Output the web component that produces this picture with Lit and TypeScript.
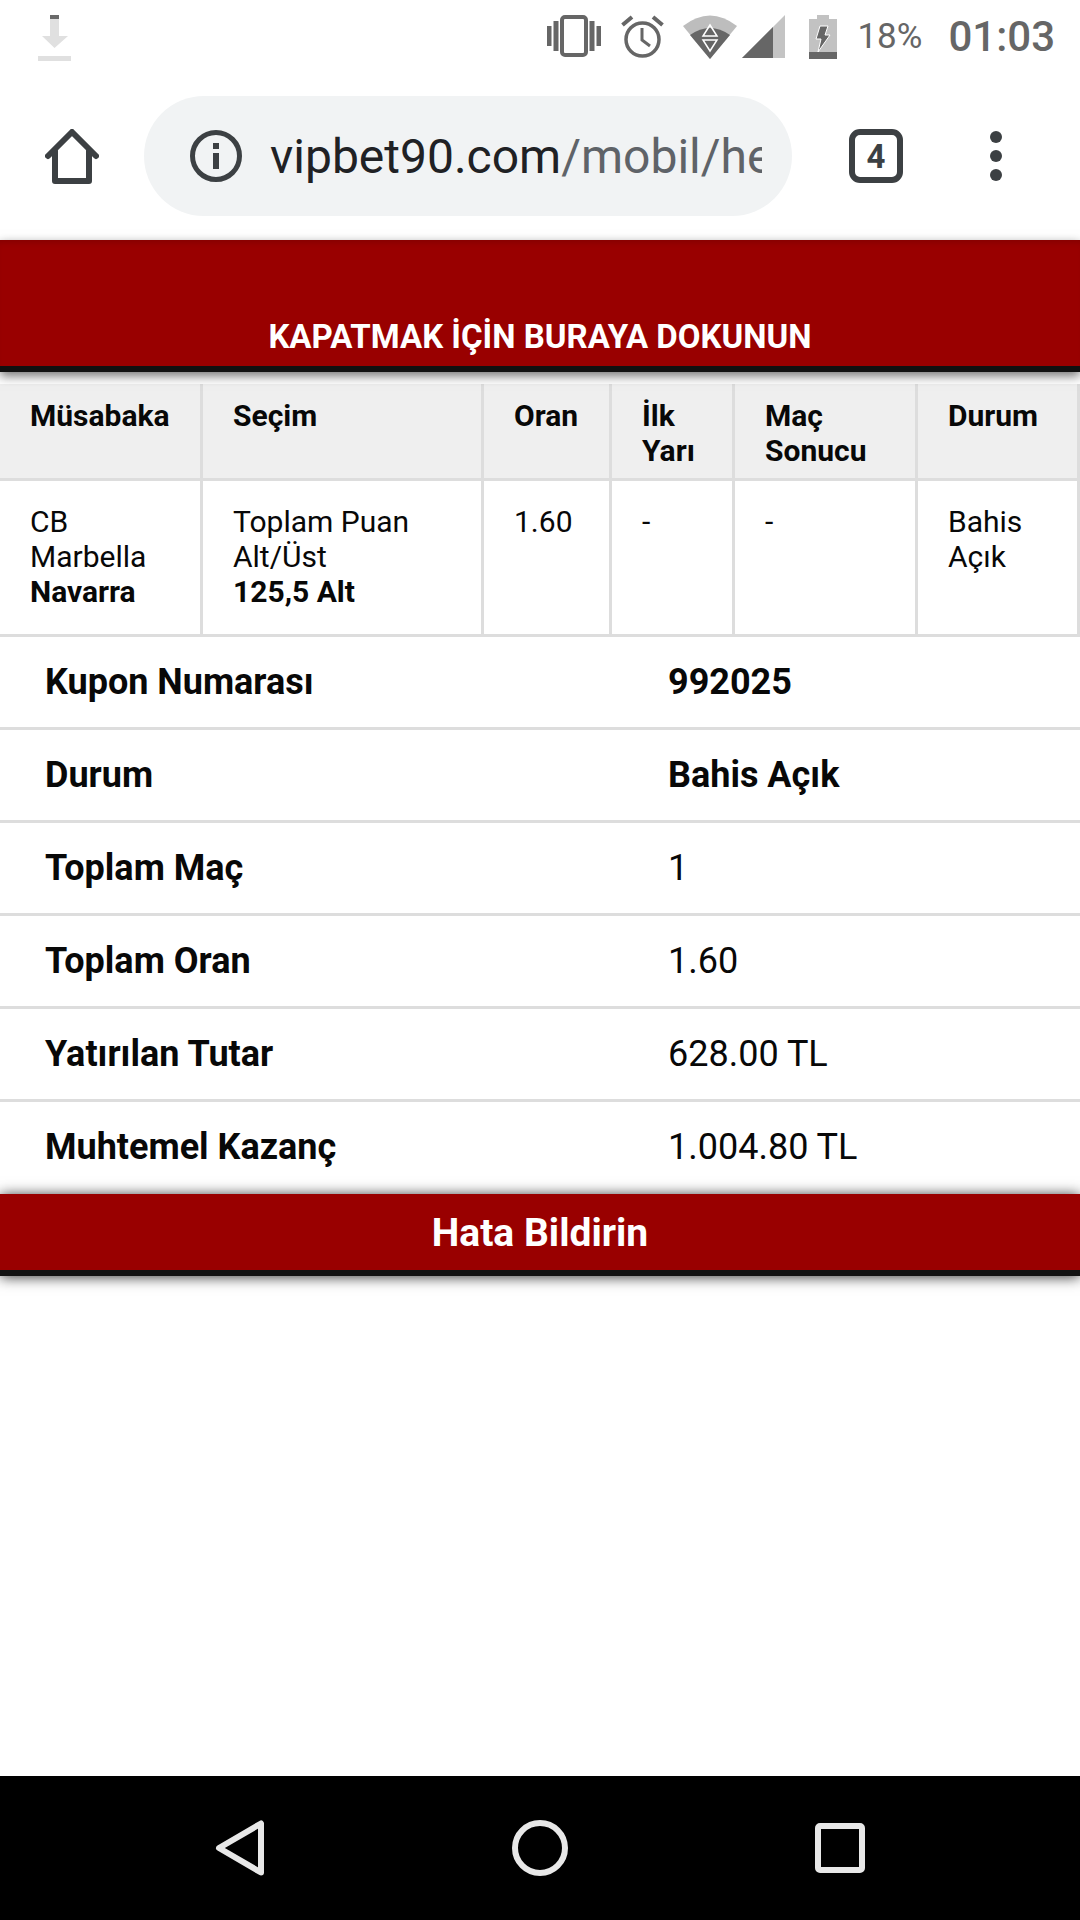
import { LitElement, html, css, svg } from 'lit';
import { customElement } from 'lit/decorators.js';

const GREY = '#666';
const INK = '#3c4043';

const headers = ['Müsabaka', 'Seçim', 'Oran', 'İlk Yarı', 'Maç Sonucu', 'Durum'];

const summary = [
  { label: 'Kupon Numarası', value: '992025', strong: true },
  { label: 'Durum', value: 'Bahis Açık', strong: true },
  { label: 'Toplam Maç', value: '1', strong: false },
  { label: 'Toplam Oran', value: '1.60', strong: false },
  { label: 'Yatırılan Tutar', value: '628.00 TL', strong: false },
  { label: 'Muhtemel Kazanç', value: '1.004.80 TL', strong: false },
];

const icons = {
  download: svg`<svg class="ic" width="34" height="46" viewBox="0 0 34 46">
    <rect x="12" y="0" width="9" height="4" fill="#6a6a6a"/>
    <path d="M12 4h9v17h9L16.5 33 4 21h8z" fill="#e0e0e0"/>
    <rect x="0" y="41" width="33" height="5" fill="#e0e0e0"/>
  </svg>`,
  vibrate: svg`<svg class="ic" width="54" height="42" viewBox="0 0 54 42" fill="${GREY}">
    <rect x="15" y="2" width="24" height="38" rx="3" fill="none" stroke="${GREY}" stroke-width="4"/>
    <rect x="0" y="11" width="4.500" height="20"/><rect x="6.500" y="6" width="5" height="30"/>
    <rect x="42.500" y="6" width="5" height="30"/><rect x="49.500" y="11" width="4.500" height="20"/>
  </svg>`,
  alarm: svg`<svg class="ic" width="43" height="43" viewBox="0 0 43 43" fill="none" stroke="${GREY}">
    <circle cx="21.500" cy="24.500" r="16.500" stroke-width="3.500"/>
    <path d="M21 13v12l8 6" stroke-width="3"/>
    <path d="M1.500 10L11 2M41.500 10L32 2" stroke-width="4"/>
  </svg>`,
  wifi: svg`<svg class="ic" width="54" height="44" viewBox="0 0 54 44">
    <path d="M0 11Q27 -10 54 11L27 44Z" fill="#bdbdbd"/>
    <path d="M7 20Q27 6 47 20L27 44Z" fill="${GREY}"/>
    <path d="M27 10l7 11H20zM20 25h14l-7 11z" fill="none" stroke="#fff" stroke-width="1.500"/>
  </svg>`,
  signal: svg`<svg class="ic" width="43" height="43" viewBox="0 0 43 43">
    <path d="M0 43L43 0V43Z" fill="#c4c4c4"/>
    <path d="M0 43L31 12V43Z" fill="${GREY}"/>
  </svg>`,
  battery: svg`<svg class="ic" width="28" height="44" viewBox="0 0 28 44">
    <path d="M0 4h8V0h12v4h8v40H0z" fill="#c2c2c2"/>
    <rect x="0" y="37" width="28" height="7" fill="${GREY}"/>
    <path d="M11 11h8l-3 9h5L9 37l3-13H7z" fill="${GREY}" stroke="#fff" stroke-width="1"/>
  </svg>`,
  home: svg`<svg width="54" height="55" viewBox="0 0 54 55" fill="none" stroke="${INK}" stroke-width="6" stroke-linecap="round" stroke-linejoin="round">
    <path d="M3 27L27 3l24 24"/>
    <path d="M10 22v30h34V22"/>
  </svg>`,
  info: svg`<svg width="52" height="52" viewBox="0 0 52 52">
    <circle cx="26" cy="26" r="23.500" fill="none" stroke="${INK}" stroke-width="5"/>
    <rect x="23" y="13" width="6" height="6" fill="${INK}"/>
    <rect x="23" y="23" width="6" height="16" fill="${INK}"/>
  </svg>`,
  more: svg`<svg width="12" height="50" viewBox="0 0 12 50" fill="${INK}">
    <circle cx="6" cy="6" r="6"/><circle cx="6" cy="25" r="6"/><circle cx="6" cy="44" r="6"/>
  </svg>`,
  back: svg`<svg width="50" height="56" viewBox="0 0 50 56" fill="none" stroke="#e8e8e8" stroke-width="6" stroke-linejoin="round">
    <path d="M46 3.500V52.500L4 28Z"/>
  </svg>`,
  circle: svg`<svg width="56" height="56" viewBox="0 0 56 56">
    <circle cx="28" cy="28" r="25" fill="none" stroke="#e8e8e8" stroke-width="6"/>
  </svg>`,
  square: svg`<svg width="50" height="50" viewBox="0 0 50 50">
    <rect x="3" y="3" width="44" height="44" rx="2" fill="none" stroke="#e8e8e8" stroke-width="6"/>
  </svg>`,
};

@customElement('app-root')
export class AppRoot extends LitElement {
  static styles = css`
    :host {
      display: block;
      width: 1080px;
      height: 1920px;
      background: #fff;
      font-family: Roboto, 'Liberation Sans', sans-serif;
      color: #080808;
    }

    .page { display: flex; flex-direction: column; height: 1920px; }
    .ic { display: block; flex: none; }

    .status {
      height: 80px;
      flex: none;
      display: flex;
      align-items: flex-start;
      padding: 14px 25px 0 38px;
      box-sizing: border-box;
      color: #666;
    }
    .status .ic { margin-top: 1px; }
    .status .download { margin: 0 auto 0 0; }
    .status .gap-20 { margin-left: 20px; }
    .status .gap-19 { margin-left: 19px; }
    .status .gap-5 { margin-left: 5px; }
    .status .gap-24 { margin-left: 24px; }
    .pct { font-size: 35px; line-height: 46px; margin-left: 20px; }
    .clock { font-size: 42px; line-height: 46px; font-weight: 500; margin-left: 26px; }

    .toolbar {
      height: 160px;
      flex: none;
      display: flex;
      align-items: center;
      padding: 0 0 8px 45px;
      box-sizing: border-box;
    }
    .home { display: flex; margin-right: 45px; }
    .pill {
      width: 648px;
      height: 120px;
      border-radius: 60px;
      background: #f1f3f4;
      display: flex;
      align-items: center;
      padding: 0 30px 0 46px;
      box-sizing: border-box;
      flex: none;
    }
    .url {
      margin: 2px 0 0 28px;
      font-size: 48px;
      line-height: 60px;
      white-space: nowrap;
      overflow: hidden;
      flex: 1;
      color: #202124;
    }
    .url span { color: #5f6368; }
    .tabs {
      width: 54px;
      height: 54px;
      margin-left: 57px;
      border: 6px solid #3c4043;
      border-radius: 11px;
      box-sizing: border-box;
      display: flex;
      align-items: center;
      justify-content: center;
      font: 700 33px/1 Roboto, sans-serif;
      color: #3c4043;
    }
    .more { display: flex; margin-left: 87px; }

    .close {
      height: 132px;
      flex: none;
      background: #990000;
      border-bottom: 6px solid #111;
      box-sizing: border-box;
      display: flex;
      align-items: flex-end;
      justify-content: center;
      padding-bottom: 11px;
      color: #fff;
      font-size: 33px;
      line-height: 36px;
      font-weight: 700;
      box-shadow: 0 4px 10px rgba(0, 0, 0, 0.55), inset 0 6px 6px -4px rgba(0, 0, 0, 0.15);
      position: relative;
    }

    .bets {
      margin-top: 12px;
      flex: none;
      display: grid;
      grid-template-columns: 203px 281px 128px 123px 183px 162px;
      grid-template-rows: 97px 156px;
      font-size: 30px;
      line-height: 35px;
    }
    .cell {
      border-right: 3px solid #ddd;
      border-bottom: 3px solid #ddd;
      padding: 23px 20px 0 30px;
      box-sizing: border-box;
      font-weight: 400;
    }
    .cell.first { padding-right: 30px; }
    .head {
      background: #efefef;
      padding-top: 14px;
      font-weight: 700;
    }
    .cell b { font-weight: 700; display: block; }

    .rows { flex: none; }
    .row {
      height: 93px;
      display: grid;
      grid-template-columns: 623px 1fr;
      align-items: center;
      padding-left: 45px;
      border-bottom: 3px solid #ddd;
      box-sizing: border-box;
      font-size: 36px;
    }
    .row:last-child { border-bottom: 0; height: 92px; padding-bottom: 3px; }
    .row .label, .row .strong { font-weight: 700; }

    .report {
      height: 82px;
      flex: none;
      background: #990000;
      border-bottom: 6px solid #111;
      box-sizing: border-box;
      display: flex;
      align-items: center;
      justify-content: center;
      color: #fff;
      font-size: 39px;
      font-weight: 700;
      padding-top: 2px;
      box-shadow: 0 1px 13px rgba(0, 0, 0, 0.8);
      position: relative;
    }

    .spacer { flex: 1; }

    .nav {
      height: 144px;
      flex: none;
      background: #000;
      display: grid;
      grid-template-columns: 215px 50px 247px 56px 247px 50px;
      align-items: center;
    }
    .nav svg { display: block; }
    .nav div:nth-child(1) { grid-column: 2; }
    .nav div:nth-child(2) { grid-column: 4; }
    .nav div:nth-child(3) { grid-column: 6; }
  `;

  render() {
    return html`
      <div class="page">
        <div class="status">
          <div class="download">${icons.download}</div>
          ${icons.vibrate}
          <div class="gap-20">${icons.alarm}</div>
          <div class="gap-19">${icons.wifi}</div>
          <div class="gap-5">${icons.signal}</div>
          <div class="gap-24">${icons.battery}</div>
          <div class="pct">18%</div>
          <div class="clock">01:03</div>
        </div>

        <div class="toolbar">
          <div class="home">${icons.home}</div>
          <div class="pill">
            ${icons.info}
            <div class="url">vipbet90.com<span>/mobil/he</span></div>
          </div>
          <div class="tabs">4</div>
          <div class="more">${icons.more}</div>
        </div>

        <div class="close">KAPATMAK İÇİN BURAYA DOKUNUN</div>

        <div class="bets">
          ${headers.map((h) => html`<div class="cell head">${h}</div>`)}
          <div class="cell first">CB Marbella <b>Navarra</b></div>
          <div class="cell">Toplam Puan<br />Alt/Üst <b>125,5 Alt</b></div>
          <div class="cell">1.60</div>
          <div class="cell">-</div>
          <div class="cell">-</div>
          <div class="cell">Bahis Açık</div>
        </div>

        <div class="rows">
          ${summary.map((r) => html`
            <div class="row">
              <div class="label">${r.label}</div>
              <div class=${r.strong ? 'strong' : ''}>${r.value}</div>
            </div>
          `)}
        </div>

        <div class="report">Hata Bildirin</div>
        <div class="spacer"></div>

        <div class="nav">
          <div>${icons.back}</div>
          <div>${icons.circle}</div>
          <div>${icons.square}</div>
        </div>
      </div>
    `;
  }
}
